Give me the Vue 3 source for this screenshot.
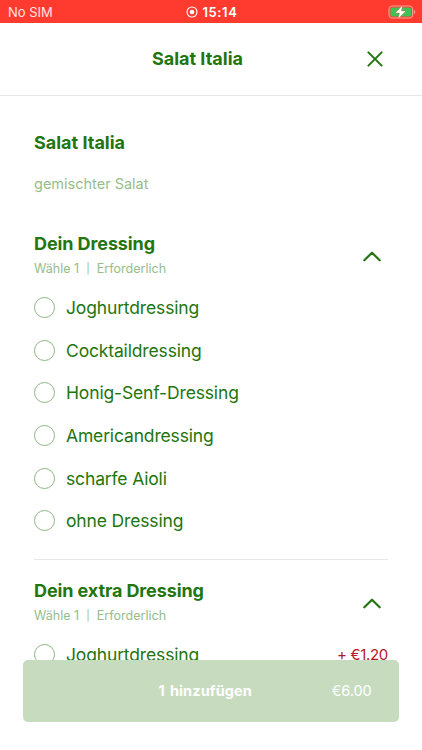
<template>
  <div class="screen">
    <div class="status">
      <span class="carrier">No SIM</span>
      <span class="clock">
        <svg width="12" height="12" viewBox="0 0 12 12">
          <circle cx="6" cy="6" r="5" fill="none" stroke="#fff" stroke-width="1.1" />
          <circle cx="6" cy="6" r="2.3" fill="#fff" />
        </svg>
        <b>15:14</b>
      </span>
      <svg class="battery" width="28" height="14" viewBox="0 0 28 14">
        <rect x="1" y="1" width="23.6" height="12" rx="3.4" fill="none" stroke="#ff9d95" stroke-width="1.1" />
        <rect x="2.4" y="2.4" width="20.8" height="9.2" rx="2" fill="#3fc153" />
        <path d="M25.9 5.1v3.8c.9-.3 1.3-1 1.3-1.9s-.4-1.6-1.3-1.9z" fill="#ff9d95" />
        <path d="M14.6.2 7.2 8h4.3l-1.4 5.8L17.9 6h-4.5z" fill="#fff" stroke="#ff3b30" stroke-width="0.3" />
      </svg>
    </div>

    <header class="header">
      <h1>Salat Italia</h1>
      <svg class="close" width="16" height="16" viewBox="0 0 16 16">
        <path d="M1.4 1.4 14.6 14.6M14.6 1.4 1.4 14.6" />
      </svg>
    </header>

    <main class="content">
      <h2 class="name">Salat Italia</h2>
      <p class="desc">gemischter Salat</p>

      <section v-for="group in groups" :key="group.title" class="group">
        <div class="group-head">
          <div>
            <h2>{{ group.title }}</h2>
            <p class="hint"><span>Wähle 1</span><span class="bar">|</span><span>Erforderlich</span></p>
          </div>
          <svg class="chevron" width="18" height="11" viewBox="0 0 18 11">
            <path d="M1.3 9.3 9 1.7l7.7 7.6" />
          </svg>
        </div>
        <label v-for="item in group.items" :key="item.label" class="option" @click="group.selected = item.label">
          <span class="radio" :class="{ active: group.selected === item.label }"></span>
          <span class="label">{{ item.label }}</span>
          <span v-if="item.price" class="price">+ {{ item.price }}</span>
        </label>
      </section>
    </main>

    <button class="add" type="button">
      <b>1 hinzufügen</b>
      <span>€6.00</span>
    </button>
  </div>
</template>

<script setup>
import { reactive } from 'vue'

const groups = reactive([
  {
    title: 'Dein Dressing',
    selected: null,
    items: [
      { label: 'Joghurtdressing' },
      { label: 'Cocktaildressing' },
      { label: 'Honig-Senf-Dressing' },
      { label: 'Americandressing' },
      { label: 'scharfe Aioli' },
      { label: 'ohne Dressing' }
    ]
  },
  {
    title: 'Dein extra Dressing',
    selected: null,
    items: [{ label: 'Joghurtdressing', price: '€1.20' }]
  }
])
</script>

<style>
body {
  margin: 0;
  background: #fff;
}
</style>

<style scoped>
.screen {
  position: relative;
  height: 750px;
  overflow: hidden;
  background: #fff;
  color: #23750f;
  font-family: Inter, "Liberation Sans", sans-serif;
}

.status {
  display: grid;
  grid-template-columns: 1fr auto 1fr;
  align-items: center;
  height: 23px;
  padding: 0 6px 0 8px;
  background: #ff3b30;
  color: #fff;
  font-size: 13px;
}

.carrier {
  color: #ffe3e0;
}

.clock {
  display: flex;
  align-items: center;
  gap: 5px;
  margin-right: 1px;
}

.clock b {
  font-weight: 600;
  letter-spacing: 0.6px;
}

.battery {
  justify-self: end;
}

.header {
  display: grid;
  grid-template-columns: 1fr auto 1fr;
  align-items: center;
  box-sizing: border-box;
  height: 73px;
  padding-right: 39px;
  padding-left: 12px;
  border-bottom: 1px solid #e8e8e6;
}

h1,
h2,
p {
  margin: 0;
}

h1,
h2 {
  font-size: 18px;
  font-weight: 700;
  line-height: 24px;
}

.header h1 {
  grid-column: 2;
}

.close {
  justify-self: end;
}

.close path,
.chevron path {
  fill: none;
  stroke: currentColor;
  stroke-width: 2;
  stroke-linecap: round;
  stroke-linejoin: round;
}

.chevron path {
  stroke-width: 2.2;
}

.content {
  padding: 35px 34px 0;
}

.desc {
  margin-top: 19px;
  color: #95bd8b;
  font-size: 14.5px;
  line-height: 20px;
}

.group {
  padding: 38px 0 17px;
}

.group + .group {
  padding-top: 19px;
  border-top: 1px solid #e8e8e6;
}

.group-head {
  display: flex;
  align-items: flex-start;
  justify-content: space-between;
  height: 44px;
  margin-bottom: 10px;
}

.group-head h2 {
  letter-spacing: -0.1px;
}

.hint {
  display: flex;
  gap: 7px;
  margin-top: 4px;
  color: #95bd8b;
  font-size: 12.5px;
  letter-spacing: 0.03px;
  line-height: 18px;
}

.bar {
  font-size: 10.5px;
}

.chevron {
  margin: 19px 7px 0 0;
}

.option {
  display: flex;
  align-items: center;
  height: 42.7px;
  font-size: 17.5px;
  letter-spacing: -0.15px;
}

.radio {
  box-sizing: border-box;
  width: 21px;
  height: 21px;
  margin-right: 11px;
  border: 1px solid #8db683;
  border-radius: 50%;
}

.radio.active {
  border: 6px solid #23750f;
}

.price {
  margin-left: auto;
  color: #b5182c;
  font-size: 15px;
  letter-spacing: -0.3px;
}

.add {
  position: absolute;
  top: 660px;
  right: 23px;
  left: 23px;
  display: grid;
  grid-template-columns: 1fr auto 1fr;
  align-items: center;
  height: 61.5px;
  padding: 0 27.5px 0 16px;
  border: none;
  border-radius: 5px;
  background: #c7dbbf;
  color: #fff;
  font-family: inherit;
  font-size: 14.5px;
}

.add b {
  grid-column: 2;
  letter-spacing: 0.1px;
  word-spacing: 1.5px;
}

.add span {
  justify-self: end;
  letter-spacing: -0.1px;
}
</style>
